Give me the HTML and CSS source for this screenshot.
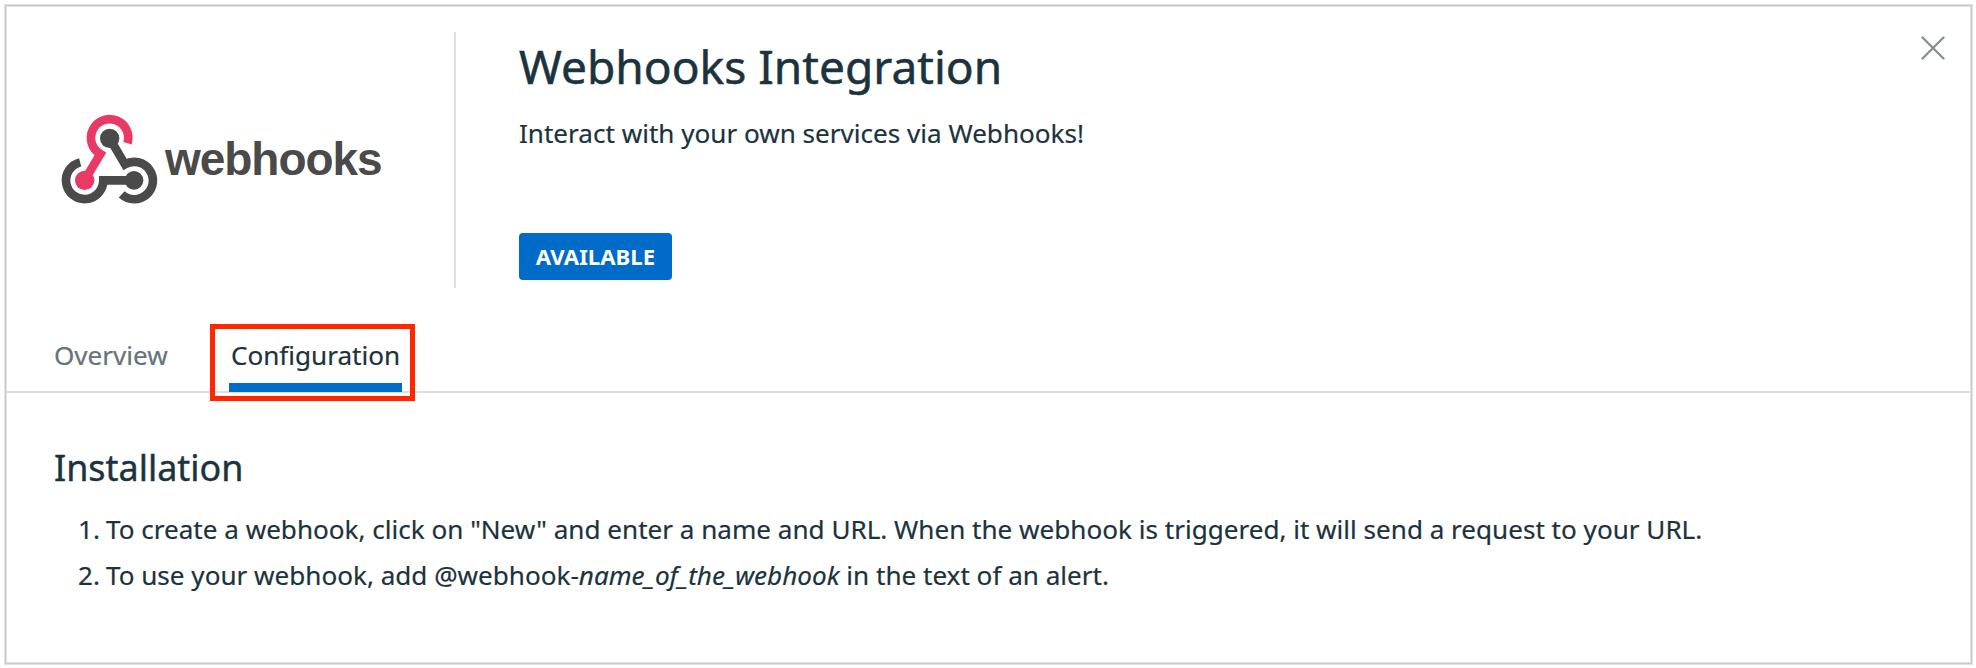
FILE: index.html
```html
<!DOCTYPE html>
<html lang="en">
<head>
<meta charset="utf-8">
<title>Webhooks Integration</title>
<link rel="stylesheet" href="styles.css">
</head>
<body>
<main class="panel">
  <header class="header">
    <div class="brand">
      <svg class="logo" viewBox="0 0 1080 420" role="img" aria-label="webhooks">
        <g fill="none" stroke="#4a4a4a" stroke-width="26">
          <path d="M120.500 217A56 56 0 1 0 190 271H281"/>
          <path d="M209 145L255 223A56 56 0 1 1 245 313"/>
          <path stroke="#e83a65" d="M262.500 159.500A56 56 0 1 0 181 192L134 271"/>
        </g>
        <circle cx="209" cy="145" r="29" fill="#4a4a4a"/>
        <circle cx="282" cy="271" r="28" fill="#4a4a4a"/>
        <circle cx="134" cy="271" r="29" fill="#e83a65"/>
        <text class="wordmark" x="375" y="255" textLength="653" lengthAdjust="spacing">webhooks</text>
      </svg>
    </div>
    <div class="summary">
      <h1 class="title">Webhooks Integration</h1>
      <p class="subtitle">Interact with your own services via Webhooks!</p>
      <span class="badge">AVAILABLE</span>
    </div>
    <button class="close" aria-label="Close">
      <svg viewBox="0 0 24 24" width="24" height="24"><path d="M1.500 1.500L22.500 22.500M22.500 1.500L1.500 22.500"/></svg>
    </button>
  </header>
  <nav class="tabs">
    <a class="tab">Overview</a>
    <div class="highlight"><a class="tab active">Configuration</a></div>
  </nav>
  <section class="content">
    <h2 class="heading">Installation</h2>
    <ol class="steps">
      <li><span class="num">1.</span><span>To create a webhook, click on "New" and enter a name and URL. When the webhook is triggered, it will send a request to your URL.</span></li>
      <li><span class="num">2.</span><span>To use your webhook, add @webhook-<em>name_of_the_webhook</em> in the text of an alert.</span></li>
    </ol>
  </section>
</main>
</body>
</html>
```
FILE: styles.css
```css
* { box-sizing: border-box; }
body {
  margin: 0;
  padding: 5px 4px 4px 5px;
  height: 668px;
  overflow: hidden;
  background: #fff;
  color: #1b333d;
  font: 26.090px/46px "Noto Sans", sans-serif;
  -webkit-text-stroke: 0.200px currentColor;
}
h1, h2, p, ol { margin: 0; padding: 0; font-weight: 400; }
.panel {
  height: 659px;
  padding: 1px;
  border: 1px solid #c9c9c9;
  box-shadow: 0 0 0 1px #e2e2e2, inset 0 0 0 1px #e2e2e2;
  background: #fff;
}
.header {
  display: flex;
  height: 281px;
  padding-top: 25px;
}
.brand {
  width: 449px;
  height: 256px;
  padding: 58px 0 0 33px;
  border-right: 2px solid #e0e0e0;
}
.logo { display: block; width: 360px; height: 140px; }
.wordmark { font: bold 138px "Liberation Sans", sans-serif; fill: #4a4a4a; stroke: none; }
.summary { flex: 1; padding: 1px 0 0 63px; }
.title { font-size: 46.100px; line-height: 67px; white-space: nowrap; -webkit-text-stroke-width: 0.500px; }
.subtitle { margin-top: 10px; }
.badge {
  display: block;
  width: 153px;
  height: 47px;
  margin-top: 77px;
  border-radius: 4px;
  background: #006bc8;
  color: #fff;
  font-size: 22.200px;
  font-weight: 700;
  line-height: 47px;
  text-align: center;
  -webkit-text-stroke-width: 0;
}
.close {
  align-self: flex-start;
  width: 24px;
  height: 24px;
  margin: 4px 25px 0 0;
  padding: 0;
  border: 0;
  background: none;
}
.close svg { display: block; fill: none; stroke: #879097; stroke-width: 2.400; stroke-linecap: round; }
.tabs {
  display: flex;
  height: 105px;
  padding: 36px 0 0 47px;
  border-bottom: 2px solid #dedede;
}
.tab { display: block; color: #65747b; }
.tabs > .tab { width: 156px; padding-top: 8px; }
.highlight {
  position: relative;
  width: 205px;
  height: 77px;
  padding: 3px 8px 0 14px;
  border: 5px solid #ff2600;
}
.active {
  height: 60px;
  border-bottom: 9px solid #006bc8;
  color: #1b333d;
  text-align: center;
}
.content { padding: 50px 0 0 47px; }
.heading { font-size: 35.900px; line-height: 50px; -webkit-text-stroke-width: 0.400px; }
.steps { margin-top: 13px; list-style: none; }
.steps li { display: flex; padding-left: 24px; white-space: nowrap; }
.num { width: 28px; }
```
